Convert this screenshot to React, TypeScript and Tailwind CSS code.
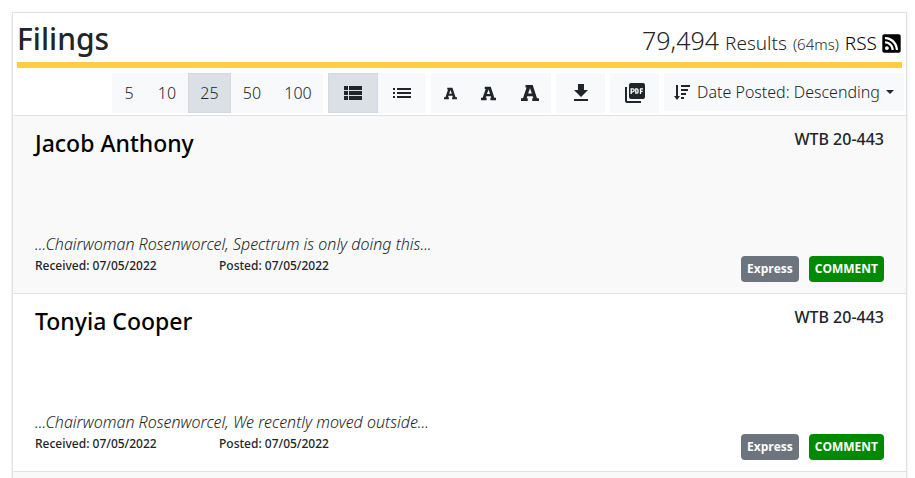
import React from "react";
import { MdViewList, MdFileDownload } from "react-icons/md";
import { FaRssSquare } from "react-icons/fa";

const filings = [
  { name: "Jacob Anthony", excerpt: "...Chairwoman Rosenworcel, Spectrum is only doing this..." },
  { name: "Tonyia Cooper", excerpt: "...Chairwoman Rosenworcel, We recently moved outside..." },
];

const pageSizes = [
  { size: 5, width: "w-[34px]" },
  { size: 10, width: "w-[42px]" },
  { size: 25, width: "w-[43px]" },
  { size: 50, width: "w-[42px]" },
  { size: 100, width: "w-[50px]" },
];

function LetterA({ size }: { size: number }) {
  return (
    <svg width={size} height={size} viewBox="0 0 20 20" fill="currentColor" aria-hidden="true">
      <path
        fillRule="evenodd"
        d="M5 1h8l4.800 14.800H20V19h-7.500v-3.200h1.200L13 13.500H7l-.7 2.300h1.200V19H0v-3.200h2.200L6.200 4H5V1zm5 3.800L7.900 10.500h4.200z"
      />
    </svg>
  );
}

function PdfIcon() {
  return (
    <svg width="20" height="20" viewBox="0 0 20 20" aria-hidden="true">
      <path d="M0 4h2v14h14v2H2a2 2 0 0 1-2-2z" fill="currentColor" />
      <rect x="4" width="16" height="16" rx="2" fill="currentColor" />
      <path
        d="M6.200 11V5.800h1.500a1.400 1.400 0 0 1 0 3H6.200M10.800 5.800v4.400h.9a1.300 1.300 0 0 0 1.300-1.300V7.100a1.300 1.300 0 0 0-1.300-1.300zM15.500 11V5.800H18M15.500 8.300h2.200"
        fill="none"
        stroke="#fff"
        strokeWidth="1.300"
      />
    </svg>
  );
}

export default function App() {
  return (
    <main className="h-screen overflow-hidden bg-white pt-3 pr-2 pl-3 font-['Noto_Sans','Open_Sans',sans-serif] text-[#212529]">
      <section className="border border-[#dee2e6] bg-white shadow-sm">
        <header className="mx-1 flex h-[55px] items-end justify-between border-b-[6px] border-[#ffcc44] pb-1">
          <h1 className="text-[30px] leading-[38px] font-medium">Filings</h1>
          <div className="flex items-baseline gap-[6px] font-[350]">
            <span className="text-[25px] leading-9">79,494</span>
            <span className="text-[19px]">Results</span>
            <span className="text-[15px]">(64ms)</span>
            <a href="#rss" className="flex items-center gap-1 text-[19px] text-black">
              RSS <FaRssSquare size={21} />
            </a>
          </div>
        </header>
        <div className="flex h-[47px] items-start justify-end gap-[5px] pt-[5px] pr-[2px] text-base">
          <div className="flex bg-[#f8f9fa] font-[350]">
            {pageSizes.map(({ size, width }) => (
              <button key={size} className={`${width} h-10 ${size === 25 ? "border border-[#d3d9df] bg-[#dae0e5]" : ""}`}>
                {size}
              </button>
            ))}
          </div>
          <div className="flex bg-[#f8f9fa]">
            <button aria-label="Detailed view" className="flex h-10 w-[50px] items-center justify-center border border-[#d3d9df] bg-[#dae0e5]">
              <MdViewList size={24} />
            </button>
            <button aria-label="List view" className="flex h-10 w-[48px] items-center justify-center">
              <svg width="18" height="10" fill="currentColor">
                <path d="M0 0h2v2H0zM4 0h14v2H4zM0 4h2v2H0zM4 4h14v2H4zM0 8h2v2H0zM4 8h14v2H4z" />
              </svg>
            </button>
          </div>
          <div className="flex bg-[#f8f9fa]">
            <button aria-label="Small text" className="flex h-10 w-[38px] items-center justify-center"><LetterA size={13} /></button>
            <button aria-label="Medium text" className="flex h-10 w-[39px] items-center justify-center"><LetterA size={15} /></button>
            <button aria-label="Large text" className="flex h-10 w-[43px] items-center justify-center"><LetterA size={18} /></button>
          </div>
          <button aria-label="Download" className="flex h-10 w-[49px] items-center justify-center bg-[#f8f9fa]"><MdFileDownload size={24} /></button>
          <button aria-label="PDF" className="flex h-10 w-[49px] items-center justify-center bg-[#f8f9fa]"><PdfIcon /></button>
          <button className="flex h-[38px] w-[240px] items-center justify-center gap-[6px] bg-[#f8f9fa] font-[350] whitespace-nowrap">
            <svg width="17" height="16" fill="currentColor" className="shrink-0">
              <path d="M2 1h2v11h2l-3 4-3-4h2zM7 1h9v2H7zM7 5h7v2H7zM7 9h5v2H7zM7 13h3v2H7z" />
            </svg>
            Date Posted: Descending
            <svg width="8" height="4" fill="currentColor" className="shrink-0"><path d="M0 0h8L4 4z" /></svg>
          </button>
        </div>
        <ul>
          {filings.map((f) => (
            <li key={f.name} className="flex h-[178px] justify-between border-t border-[#dee2e6] px-[22px] pt-[11px] pb-[11px] odd:bg-[#f9f9f9]">
              <div className="flex flex-col">
                <h2 className="text-[23px] leading-8 font-medium text-black">{f.name}</h2>
                <p className="mt-auto text-base leading-6 font-[350] italic">{f.excerpt}</p>
                <div className="mb-[6px] flex text-xs leading-5 font-medium">
                  <span className="w-[184px]">Received: 07/05/2022</span>
                  <span>Posted: 07/05/2022</span>
                </div>
              </div>
              <div className="flex flex-col items-end justify-between">
                <span className="text-base leading-6 font-medium">WTB 20-443</span>
                <div className="flex gap-[10px] font-['Open_Sans','Noto_Sans',sans-serif] text-xs font-bold text-white">
                  <span className="flex h-[26px] items-center rounded bg-[#6c757d] px-[6px]">Express</span>
                  <span className="flex h-[26px] items-center rounded bg-[#008a00] px-[6px]">COMMENT</span>
                </div>
              </div>
            </li>
          ))}
          <li className="h-[178px] border-t border-[#dee2e6] bg-[#f9f9f9]" />
        </ul>
      </section>
    </main>
  );
}
